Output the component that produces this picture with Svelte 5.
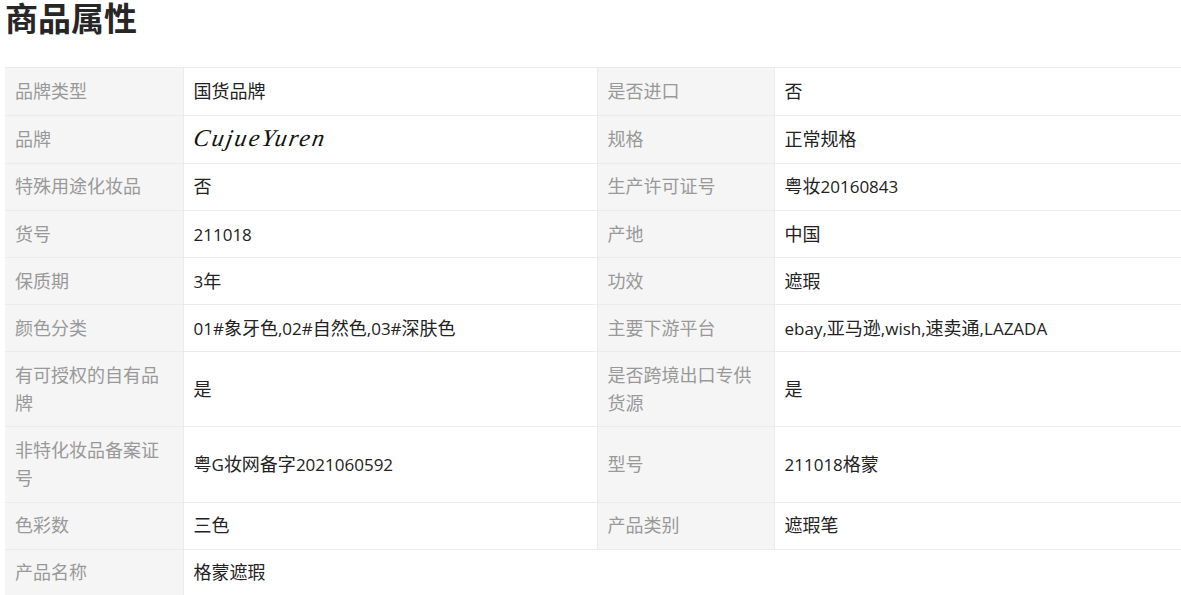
<script>
  const rows = [
    [['品牌类型', '国货品牌'], ['是否进口', '否']],
    [['品牌', 'CujueYuren', 'brand'], ['规格', '正常规格']],
    [['特殊用途化妆品', '否'], ['生产许可证号', '粤妆20160843']],
    [['货号', '211018'], ['产地', '中国']],
    [['保质期', '3年'], ['功效', '遮瑕']],
    [['颜色分类', '01#象牙色,02#自然色,03#深肤色'], ['主要下游平台', 'ebay,亚马逊,wish,速卖通,LAZADA']],
    [['有可授权的自有品牌', '是'], ['是否跨境出口专供货源', '是']],
    [['非特化妆品备案证号', '粤G妆网备字2021060592'], ['型号', '211018格蒙']],
    [['色彩数', '三色'], ['产品类别', '遮瑕笔']],
    [['产品名称', '格蒙遮瑕']],
  ];

  // latin runs sit a touch smaller than the CJK around them
  const runs = (s) => s.split(/([\x00-\x7f]+)/).filter(Boolean);
  const isLatin = (s) => /^[\x00-\x7f]/.test(s);
</script>

<div class="attrs">
  <h2>商品属性</h2>
  <table>
    <colgroup>
      <col class="c-name" />
      <col class="c-val" />
      <col class="c-name2" />
      <col />
    </colgroup>
    <tbody>
      {#each rows as row}
        <tr>
          {#each row as cell}
            <th>{cell[0]}</th>
            <td colspan={row.length === 1 ? 3 : 1}>
              {#if cell[2] === 'brand'}
                <span class="brand">{cell[1]}</span>
              {:else}
                {#each runs(cell[1]) as run}
                  {#if isLatin(run)}<span class="lat">{run}</span>{:else}{run}{/if}
                {/each}
              {/if}
            </td>
          {/each}
        </tr>
      {/each}
    </tbody>
  </table>
</div>

<style>
  :global(html), :global(body) {
    overflow: hidden;
    background: #fff;
  }

  .attrs {
    height: 595px;
    overflow: hidden;
    font-family: "Open Sans", "Noto Sans CJK SC", sans-serif;
  }

  h2 {
    margin: 0;
    padding: 0 0 0 5px;
    height: 67.4px;
    font-size: 33px;
    line-height: 38px;
    font-weight: 700;
    color: #262626;
  }

  table {
    margin-left: 5px;
    width: 1176px;
    table-layout: fixed;
    border-collapse: collapse;
    font-size: 18px;
    line-height: 28px;
  }

  .c-name { width: 178px; }
  .c-val { width: 414px; }
  .c-name2 { width: 177px; }

  th, td {
    border-top: 1px solid #ebebeb;
    border-bottom: 1px solid #ebebeb;
    padding: 8.8px 10px 9.35px;
    text-align: left;
    font-weight: 400;
    vertical-align: middle;
  }

  th {
    background: #f5f5f5;
    color: #999;
  }

  td {
    color: #222;
    border-left: 1px solid #ebebeb;
    border-right: 1px solid #ebebeb;
  }

  td:last-child {
    border-right: 0;
  }

  .lat {
    font-size: 17px;
    line-height: 1;
  }

  .brand {
    display: inline-block;
    font-family: "Liberation Serif", serif;
    font-style: italic;
    font-size: 24px;
    line-height: 28px;
    letter-spacing: 2.1px;
    color: #111;
    transform: skewX(-10deg);
  }
</style>
